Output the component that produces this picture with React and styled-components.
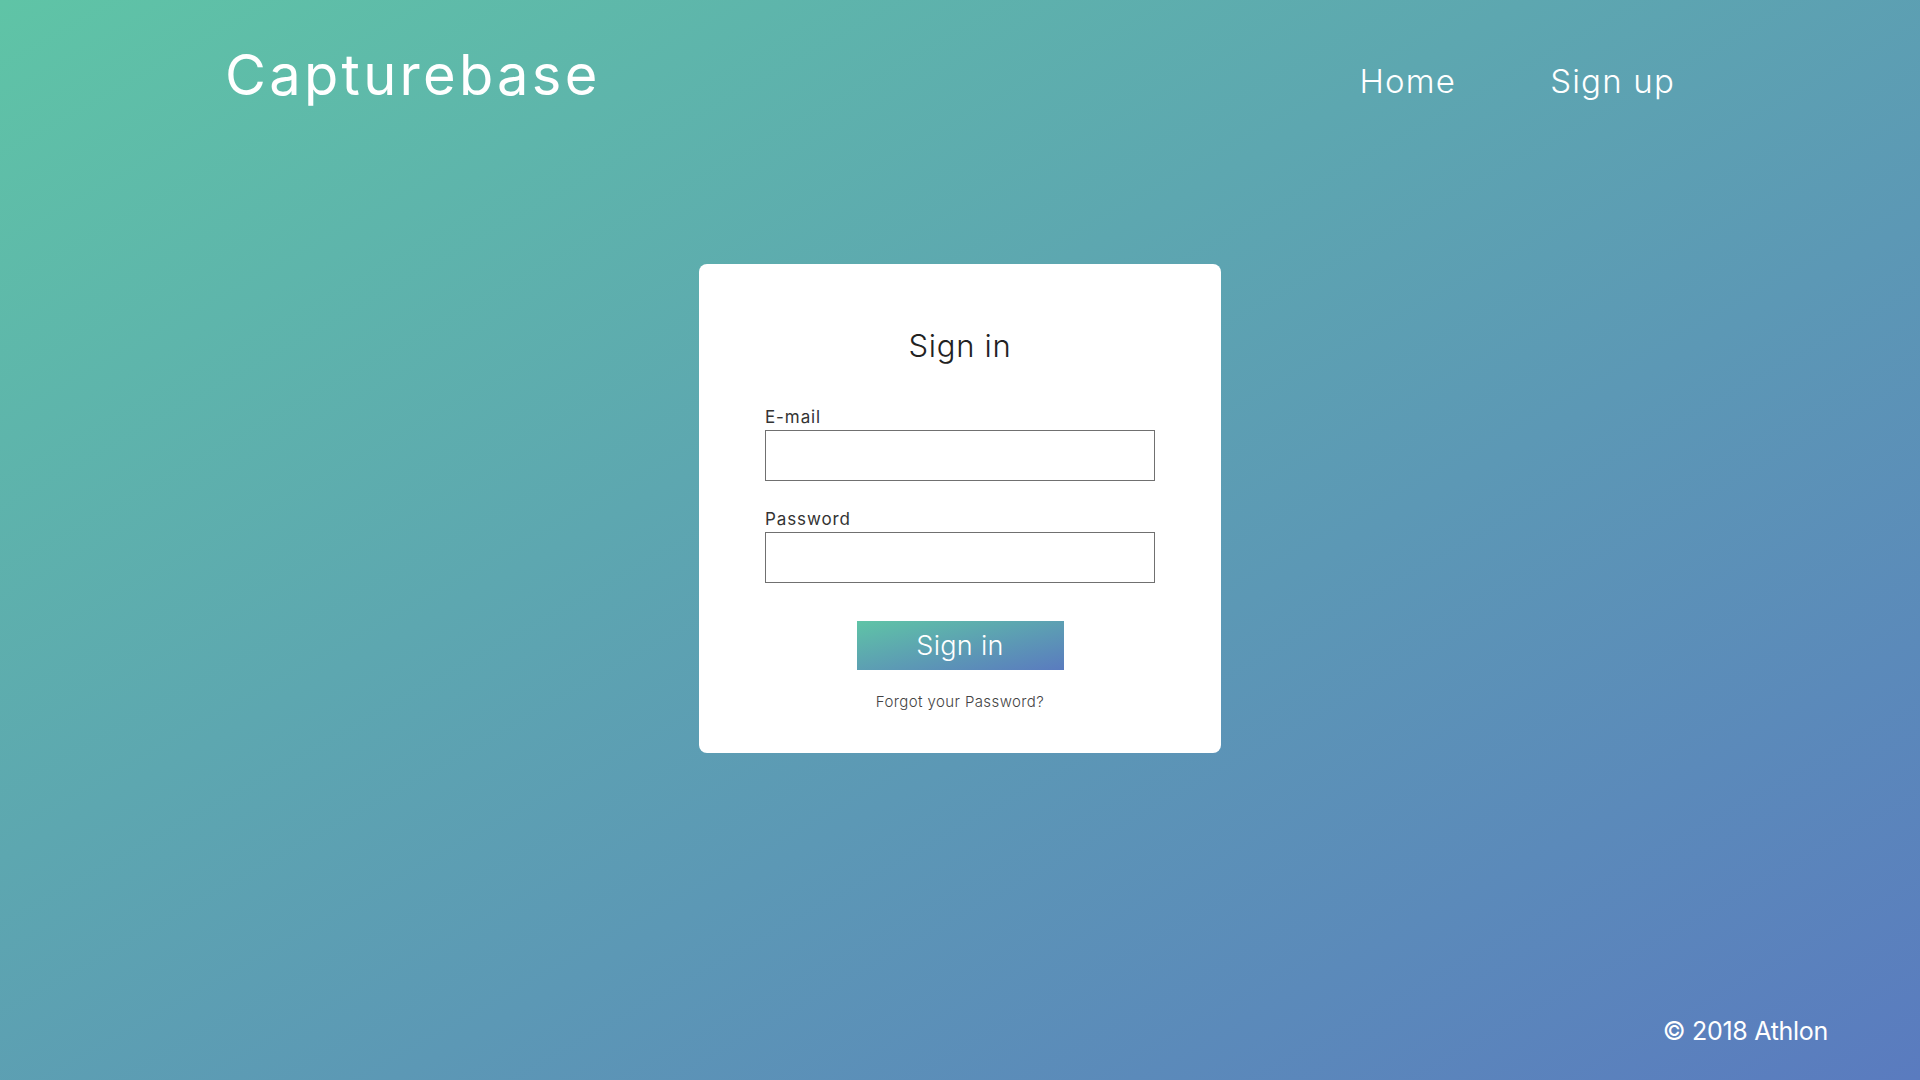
import styled, { createGlobalStyle } from "styled-components"

const GlobalStyle = createGlobalStyle`
  html, body {
    margin: 0;
    padding: 0;
  }
  body {
    font-family: Inter, "Open Sans", sans-serif;
  }
  * {
    box-sizing: border-box;
  }
`

const Page = styled.div`
  min-height: 100vh;
  display: flex;
  flex-direction: column;
  background: linear-gradient(to bottom right, #5fc4a6, #5a7bbf);
  color: #ffffff;
`

const Header = styled.header`
  display: flex;
  align-items: flex-start;
  justify-content: space-between;
  padding: 40px 245px 0 225px;
`

const Logo = styled.div`
  font-size: 56px;
  line-height: 70px;
  font-weight: 400;
  letter-spacing: 3.3px;
`

const Nav = styled.nav`
  display: flex;
  gap: 94px;
  margin-top: 6px;
`

const NavLink = styled.a`
  font-size: 33px;
  line-height: 70px;
  font-weight: 300;
  color: #ffffff;
  text-decoration: none;
  letter-spacing: 1.2px;
`

const Main = styled.main`
  flex: 1;
  display: flex;
  justify-content: center;
  align-items: flex-start;
  padding-top: 148px;
`

const Card = styled.section`
  width: 522px;
  background: #ffffff;
  border-radius: 8px;
  padding: 62px 66px 42px;
  display: flex;
  flex-direction: column;
  color: #222222;
`

const Title = styled.h1`
  margin: 0 0 41px;
  font-size: 31px;
  line-height: 40px;
  font-weight: 300;
  text-align: center;
  letter-spacing: 0.7px;
`

const Field = styled.label`
  display: flex;
  flex-direction: column;
  margin-bottom: ${(p) => p.$gap}px;
`

const Label = styled.span`
  font-size: 17px;
  line-height: 20px;
  font-weight: 400;
  color: #333333;
  margin-bottom: 3px;
  letter-spacing: 0.9px;
`

const Input = styled.input`
  height: 51px;
  width: 100%;
  border: 1px solid #707070;
  border-radius: 0;
  background: #ffffff;
  padding: 0 10px;
  font: inherit;
  font-size: 17px;
  outline: none;
`

const SubmitButton = styled.button`
  align-self: center;
  width: 207px;
  height: 49px;
  border: none;
  background: linear-gradient(to bottom right, #5fc4a6, #5a7bbf);
  color: #ffffff;
  font-family: Inter, "Open Sans", sans-serif;
  font-size: 27px;
  font-weight: 300;
  letter-spacing: 0.3px;
  cursor: pointer;
`

const Forgot = styled.a`
  align-self: center;
  margin-top: 23px;
  font-size: 15px;
  line-height: 18px;
  color: #444444;
  text-decoration: none;
  font-weight: 300;
  letter-spacing: 0.4px;
`

const Footer = styled.footer`
  display: flex;
  justify-content: flex-end;
  padding: 0 92px 34px 0;
  font-size: 25px;
  line-height: 30px;
  font-weight: 400;
  letter-spacing: -0.3px;
`

export default function App() {
  return (
    <Page>
      <GlobalStyle />
      <Header>
        <Logo>Capturebase</Logo>
        <Nav>
          <NavLink href="#">Home</NavLink>
          <NavLink href="#">Sign up</NavLink>
        </Nav>
      </Header>

      <Main>
        <Card>
          <Title>Sign in</Title>
          <Field $gap={28}>
            <Label>E-mail</Label>
            <Input type="email" />
          </Field>
          <Field $gap={38}>
            <Label>Password</Label>
            <Input type="password" />
          </Field>
          <SubmitButton type="button">Sign in</SubmitButton>
          <Forgot href="#">Forgot your Password?</Forgot>
        </Card>
      </Main>

      <Footer>© 2018 Athlon</Footer>
    </Page>
  )
}
